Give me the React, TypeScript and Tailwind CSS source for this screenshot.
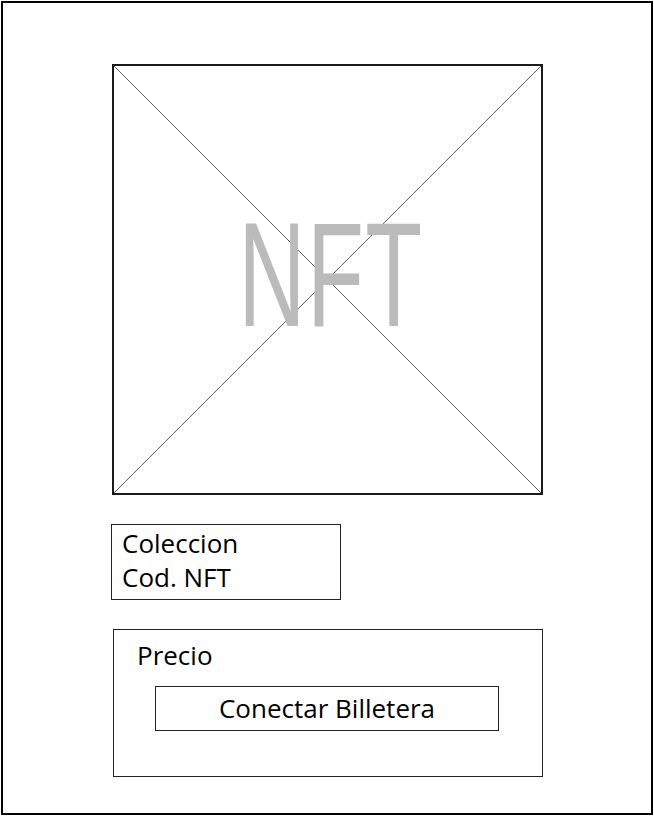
export default function App() {
  return (
    <div className="w-[654px] h-[816px] bg-white p-px">
      <div className="w-[652px] h-[814px] border-2 border-black flex flex-col pt-[61px] pl-[108px] font-['Open_Sans',sans-serif] text-black">
        {/* imagen del NFT */}
        <div className="relative w-[431px] h-[431px] ml-[1px] border-2 border-[#1a1a1a]">
          <svg className="absolute inset-0 w-full h-full" viewBox="0 0 427 427" preserveAspectRatio="none">
            <line x1="0" y1="0" x2="427" y2="427" stroke="#333" strokeWidth="0.8" />
            <line x1="427" y1="0" x2="0" y2="427" stroke="#333" strokeWidth="0.8" />
          </svg>
          <div className="absolute inset-0 flex items-center justify-center">
            <span className="font-['Liberation_Sans',sans-serif] text-[148px] leading-none text-[#bbbbbb] scale-x-[0.63] tracking-[2px] mt-[-9px] ml-[6px]">
              NFT
            </span>
          </div>
        </div>

        <div className="mt-[29px] w-[230px] h-[76px] border border-[#222] pl-[10px] pt-[1px] text-[26px] leading-[34px]">
          <div>Coleccion</div>
          <div>Cod. NFT</div>
        </div>

        <div className="mt-[29px] ml-[2px] w-[430px] h-[148px] border border-[#222] pt-[8px]">
          <div className="pl-[23px] text-[26px] leading-[34px]">Precio</div>
          <div className="ml-[41px] mt-[14px] w-[344px] h-[45px] border border-[#222] flex items-center justify-center text-[26px]">
            Conectar Billetera
          </div>
        </div>
      </div>
    </div>
  );
}
